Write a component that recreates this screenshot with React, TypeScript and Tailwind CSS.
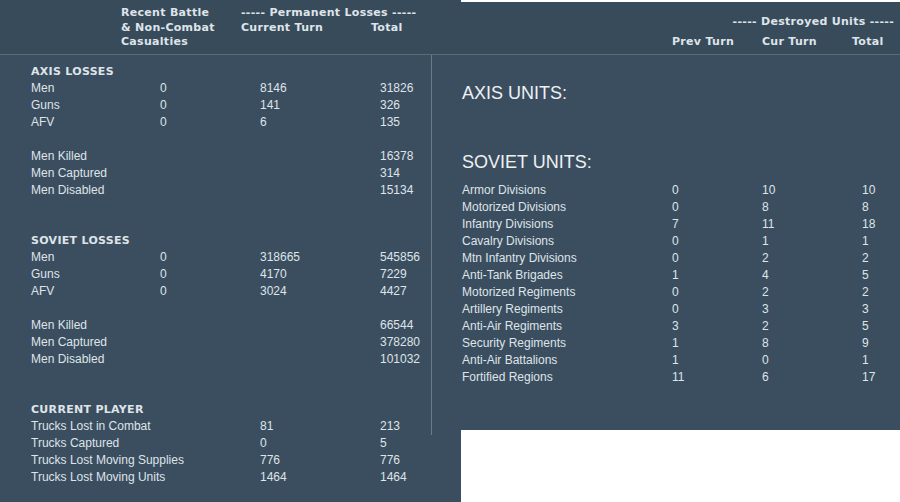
import React from "react";

const bg = "bg-[#3b4e5f]";
type R = [string, string, string, string];

function LRow({ r }: { r: R }) {
  return (
    <div className="flex h-[17px] items-center whitespace-nowrap">
      <div className="w-[129px] pl-[31px] box-content">{r[0]}</div>
      <div className="w-[100px]">{r[1]}</div>
      <div className="w-[120px]">{r[2]}</div>
      <div>{r[3]}</div>
    </div>
  );
}
function Head({ t }: { t: string }) {
  return (
    <div className="h-[17px] flex items-center pl-[31px] font-bold text-[11px] tracking-[0.3px]" style={{ fontFamily: "Verdana, 'DejaVu Sans', sans-serif" }}>
      {t}
    </div>
  );
}
const gap = (n: number) => <div style={{ height: n }} />;

const axis: R[] = [["Men", "0", "8146", "31826"], ["Guns", "0", "141", "326"], ["AFV", "0", "6", "135"]];
const axis2: R[] = [["Men Killed", "", "", "16378"], ["Men Captured", "", "", "314"], ["Men Disabled", "", "", "15134"]];
const sov: R[] = [["Men", "0", "318665", "545856"], ["Guns", "0", "4170", "7229"], ["AFV", "0", "3024", "4427"]];
const sov2: R[] = [["Men Killed", "", "", "66544"], ["Men Captured", "", "", "378280"], ["Men Disabled", "", "", "101032"]];
const cur: R[] = [["Trucks Lost in Combat", "", "81", "213"], ["Trucks Captured", "", "0", "5"], ["Trucks Lost Moving Supplies", "", "776", "776"], ["Trucks Lost Moving Units", "", "1464", "1464"]];
const units: [string, string, string, string][] = [
  ["Armor Divisions", "0", "10", "10"], ["Motorized Divisions", "0", "8", "8"], ["Infantry Divisions", "7", "11", "18"],
  ["Cavalry Divisions", "0", "1", "1"], ["Mtn Infantry Divisions", "0", "2", "2"], ["Anti-Tank Brigades", "1", "4", "5"],
  ["Motorized Regiments", "0", "2", "2"], ["Artillery Regiments", "0", "3", "3"], ["Anti-Air Regiments", "3", "2", "5"],
  ["Security Regiments", "1", "8", "9"], ["Anti-Air Battalions", "1", "0", "1"], ["Fortified Regions", "11", "6", "17"],
];

export default function App() {
  const hf = { fontFamily: "Verdana, 'DejaVu Sans', sans-serif" };
  return (
    <div className="w-[900px] h-[502px] bg-white flex text-[#dfe4e9] text-[12px] leading-[17px]" style={{ fontFamily: "'Liberation Sans', Arial, sans-serif" }}>
      <div className={`w-[461px] h-[502px] ${bg} flex flex-col`}>
        <div className="h-[55px] border-b border-[#5b6c7a] bg-[#384b5b] flex font-bold text-[11px] leading-[14.5px] pt-[6px] tracking-[0.3px]" style={hf}>
          <div className="w-[121px]" />
          <div className="w-[120px]">Recent Battle<br />&amp; Non-Combat<br />Casualties</div>
          <div>
            <div>----- Permanent Losses -----</div>
            <div className="flex"><div className="w-[130px]">Current Turn</div><div>Total</div></div>
          </div>
        </div>
        <div className="flex flex-1">
          <div className="w-[431px] h-[372px] border-r border-[#6b7b88] pt-[8px] shrink-0 box-content">
            <Head t="AXIS LOSSES" />
            {axis.map((r) => <LRow key={r[0]} r={r} />)}
            {gap(17)}
            {axis2.map((r) => <LRow key={r[0]} r={r} />)}
            {gap(33)}
            <Head t="SOVIET LOSSES" />
            {sov.map((r) => <LRow key={r[0]} r={r} />)}
            {gap(17)}
            {sov2.map((r) => <LRow key={r[0]} r={r} />)}
            {gap(33)}
            <Head t="CURRENT PLAYER" />
            {cur.map((r) => <LRow key={r[0]} r={r} />)}
          </div>
        </div>
      </div>
      <div className="w-[439px] h-[428px] mt-[2px] bg-[#3b4e5f] flex flex-col">
        <div className="h-[53px] border-b border-[#5b6c7a] bg-[#384b5b] font-bold text-[11px] tracking-[0.3px] pt-[13px]" style={hf}>
          <div className="text-right pr-[6px] leading-[14px]">----- Destroyed Units -----</div>
          <div className="flex mt-[6px] leading-[14px]">
            <div className="w-[211px]" />
            <div className="w-[90px]">Prev Turn</div>
            <div className="w-[90px]">Cur Turn</div>
            <div>Total</div>
          </div>
        </div>
        <div className="pl-[1px]">
          <div className="text-[18px] leading-[22px] mt-[27px] text-[#eef1f4]">AXIS UNITS:</div>
          <div className="text-[18px] leading-[22px] mt-[47px] mb-[9px] text-[#eef1f4]">SOVIET UNITS:</div>
          {units.map((u) => (
            <div key={u[0]} className="flex h-[17px] items-center whitespace-nowrap">
              <div className="w-[210px]">{u[0]}</div>
              <div className="w-[90px]">{u[1]}</div>
              <div className="w-[100px]">{u[2]}</div>
              <div>{u[3]}</div>
            </div>
          ))}
        </div>
      </div>
    </div>
  );
}
